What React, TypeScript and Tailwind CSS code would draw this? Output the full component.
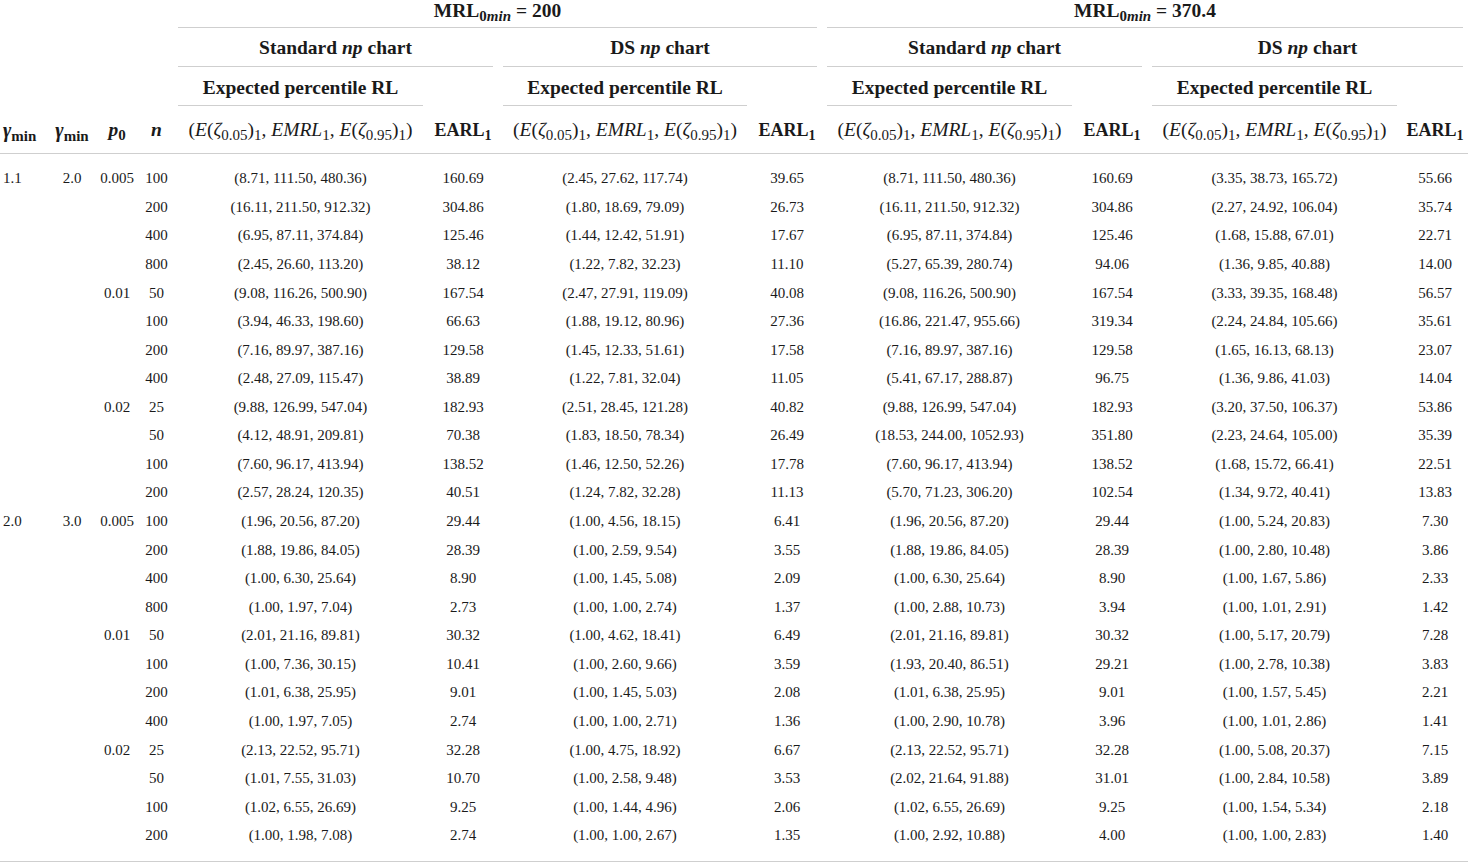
import React from "react"

type Row = {
  g1?: string
  g2?: string
  p0?: string
  n: string
  v: [string, string, string, string, string, string, string, string]
}

const rows: Row[] = [
  { g1: "1.1", g2: "2.0", p0: "0.005", n: "100", v: ["(8.71, 111.50, 480.36)", "160.69", "(2.45, 27.62, 117.74)", "39.65", "(8.71, 111.50, 480.36)", "160.69", "(3.35, 38.73, 165.72)", "55.66"] },
  { n: "200", v: ["(16.11, 211.50, 912.32)", "304.86", "(1.80, 18.69, 79.09)", "26.73", "(16.11, 211.50, 912.32)", "304.86", "(2.27, 24.92, 106.04)", "35.74"] },
  { n: "400", v: ["(6.95, 87.11, 374.84)", "125.46", "(1.44, 12.42, 51.91)", "17.67", "(6.95, 87.11, 374.84)", "125.46", "(1.68, 15.88, 67.01)", "22.71"] },
  { n: "800", v: ["(2.45, 26.60, 113.20)", "38.12", "(1.22, 7.82, 32.23)", "11.10", "(5.27, 65.39, 280.74)", "94.06", "(1.36, 9.85, 40.88)", "14.00"] },
  { p0: "0.01", n: "50", v: ["(9.08, 116.26, 500.90)", "167.54", "(2.47, 27.91, 119.09)", "40.08", "(9.08, 116.26, 500.90)", "167.54", "(3.33, 39.35, 168.48)", "56.57"] },
  { n: "100", v: ["(3.94, 46.33, 198.60)", "66.63", "(1.88, 19.12, 80.96)", "27.36", "(16.86, 221.47, 955.66)", "319.34", "(2.24, 24.84, 105.66)", "35.61"] },
  { n: "200", v: ["(7.16, 89.97, 387.16)", "129.58", "(1.45, 12.33, 51.61)", "17.58", "(7.16, 89.97, 387.16)", "129.58", "(1.65, 16.13, 68.13)", "23.07"] },
  { n: "400", v: ["(2.48, 27.09, 115.47)", "38.89", "(1.22, 7.81, 32.04)", "11.05", "(5.41, 67.17, 288.87)", "96.75", "(1.36, 9.86, 41.03)", "14.04"] },
  { p0: "0.02", n: "25", v: ["(9.88, 126.99, 547.04)", "182.93", "(2.51, 28.45, 121.28)", "40.82", "(9.88, 126.99, 547.04)", "182.93", "(3.20, 37.50, 106.37)", "53.86"] },
  { n: "50", v: ["(4.12, 48.91, 209.81)", "70.38", "(1.83, 18.50, 78.34)", "26.49", "(18.53, 244.00, 1052.93)", "351.80", "(2.23, 24.64, 105.00)", "35.39"] },
  { n: "100", v: ["(7.60, 96.17, 413.94)", "138.52", "(1.46, 12.50, 52.26)", "17.78", "(7.60, 96.17, 413.94)", "138.52", "(1.68, 15.72, 66.41)", "22.51"] },
  { n: "200", v: ["(2.57, 28.24, 120.35)", "40.51", "(1.24, 7.82, 32.28)", "11.13", "(5.70, 71.23, 306.20)", "102.54", "(1.34, 9.72, 40.41)", "13.83"] },
  { g1: "2.0", g2: "3.0", p0: "0.005", n: "100", v: ["(1.96, 20.56, 87.20)", "29.44", "(1.00, 4.56, 18.15)", "6.41", "(1.96, 20.56, 87.20)", "29.44", "(1.00, 5.24, 20.83)", "7.30"] },
  { n: "200", v: ["(1.88, 19.86, 84.05)", "28.39", "(1.00, 2.59, 9.54)", "3.55", "(1.88, 19.86, 84.05)", "28.39", "(1.00, 2.80, 10.48)", "3.86"] },
  { n: "400", v: ["(1.00, 6.30, 25.64)", "8.90", "(1.00, 1.45, 5.08)", "2.09", "(1.00, 6.30, 25.64)", "8.90", "(1.00, 1.67, 5.86)", "2.33"] },
  { n: "800", v: ["(1.00, 1.97, 7.04)", "2.73", "(1.00, 1.00, 2.74)", "1.37", "(1.00, 2.88, 10.73)", "3.94", "(1.00, 1.01, 2.91)", "1.42"] },
  { p0: "0.01", n: "50", v: ["(2.01, 21.16, 89.81)", "30.32", "(1.00, 4.62, 18.41)", "6.49", "(2.01, 21.16, 89.81)", "30.32", "(1.00, 5.17, 20.79)", "7.28"] },
  { n: "100", v: ["(1.00, 7.36, 30.15)", "10.41", "(1.00, 2.60, 9.66)", "3.59", "(1.93, 20.40, 86.51)", "29.21", "(1.00, 2.78, 10.38)", "3.83"] },
  { n: "200", v: ["(1.01, 6.38, 25.95)", "9.01", "(1.00, 1.45, 5.03)", "2.08", "(1.01, 6.38, 25.95)", "9.01", "(1.00, 1.57, 5.45)", "2.21"] },
  { n: "400", v: ["(1.00, 1.97, 7.05)", "2.74", "(1.00, 1.00, 2.71)", "1.36", "(1.00, 2.90, 10.78)", "3.96", "(1.00, 1.01, 2.86)", "1.41"] },
  { p0: "0.02", n: "25", v: ["(2.13, 22.52, 95.71)", "32.28", "(1.00, 4.75, 18.92)", "6.67", "(2.13, 22.52, 95.71)", "32.28", "(1.00, 5.08, 20.37)", "7.15"] },
  { n: "50", v: ["(1.01, 7.55, 31.03)", "10.70", "(1.00, 2.58, 9.48)", "3.53", "(2.02, 21.64, 91.88)", "31.01", "(1.00, 2.84, 10.58)", "3.89"] },
  { n: "100", v: ["(1.02, 6.55, 26.69)", "9.25", "(1.00, 1.44, 4.96)", "2.06", "(1.02, 6.55, 26.69)", "9.25", "(1.00, 1.54, 5.34)", "2.18"] },
  { n: "200", v: ["(1.00, 1.98, 7.08)", "2.74", "(1.00, 1.00, 2.67)", "1.35", "(1.00, 2.92, 10.88)", "4.00", "(1.00, 1.00, 2.83)", "1.40"] },
]

// the percentile triple as typeset in the column heads
function Triple() {
  return (
    <span className="font-normal whitespace-nowrap text-[19.5px]">
      (<i>E</i>(<i>ζ</i><sub className="text-[15px]">0.05</sub>)<sub className="text-[15px]">1</sub>, <i>EMRL</i>
      <sub className="text-[15px]">1</sub>, <i>E</i>(<i>ζ</i><sub className="text-[15px]">0.95</sub>)<sub className="text-[15px]">1</sub>)
    </span>
  )
}

function Earl() {
  return (
    <span className="font-bold whitespace-nowrap text-[18px]">
      EARL<sub className="text-[14px]">1</sub>
    </span>
  )
}

function Gamma() {
  return (
    <span className="whitespace-nowrap">
      <i className="text-[20px]">γ</i>
      <sub className="text-[15px]">min</sub>
    </span>
  )
}

function Line({ children, h }: { children?: React.ReactNode; h: string }) {
  return <div className={`mx-[5px] flex items-center justify-center border-b border-[#cfcfcf] ${h}`}>{children}</div>
}

export default function App() {
  return (
    <div className="w-[1468px] h-[864px] overflow-hidden bg-white text-[#1a1a1a]" style={{ fontFamily: '"Liberation Serif", "Times New Roman", serif' }}>
      <table className="w-[1468px] table-fixed border-collapse">
        <colgroup>
          <col className="w-[50px]" />
          <col className="w-[44px]" />
          <col className="w-[46px]" />
          <col className="w-[33px]" />
          <col className="w-[255px]" />
          <col className="w-[70px]" />
          <col className="w-[254px]" />
          <col className="w-[70px]" />
          <col className="w-[255px]" />
          <col className="w-[70px]" />
          <col className="w-[255px]" />
          <col className="w-[66px]" />
        </colgroup>
        <thead className="text-[19.5px] leading-[22px]">
          <tr>
            <th colSpan={4} className="p-0" />
            <th colSpan={4} className="p-0 font-bold">
              <Line h="h-[28px] pb-[5px]">
                <span>MRL<sub className="text-[15px]">0<i>min</i></sub> = 200</span>
              </Line>
            </th>
            <th colSpan={4} className="p-0 font-bold">
              <Line h="h-[28px] pb-[5px]">
                <span>MRL<sub className="text-[15px]">0<i>min</i></sub> = 370.4</span>
              </Line>
            </th>
          </tr>
          <tr>
            <th colSpan={4} className="p-0" />
            {["Standard", "DS", "Standard", "DS"].map((t, i) => (
              <th key={i} colSpan={2} className="p-0 font-bold">
                <Line h="h-[39px] pt-[2px]">
                  <span>{t} <i>np</i> chart</span>
                </Line>
              </th>
            ))}
          </tr>
          <tr>
            <th colSpan={4} className="p-0" />
            {[0, 1, 2, 3].map((i) => (
              <React.Fragment key={i}>
                <th className="p-0 font-bold">
                  <Line h="h-[39px] pt-[4px]">Expected percentile RL</Line>
                </th>
                <th className="p-0" />
              </React.Fragment>
            ))}
          </tr>
          <tr className="h-[47px] border-b border-[#cfcfcf]">
            <th className="pl-[3px] pt-[2px] text-left font-bold">
              <Gamma />
            </th>
            <th className="pt-[2px] text-center font-bold">
              <Gamma />
            </th>
            <th className="pt-[2px] text-center font-bold">
              <i>p</i>
              <sub className="text-[15px]">0</sub>
            </th>
            <th className="pt-[2px] text-center font-bold">
              <i>n</i>
            </th>
            {[0, 1, 2, 3].map((i) => (
              <React.Fragment key={i}>
                <th className="pt-[2px] text-center">
                  <Triple />
                </th>
                <th className="pt-[2px] text-center">
                  <Earl />
                </th>
              </React.Fragment>
            ))}
          </tr>
        </thead>
        <tbody className="text-[15px] leading-[20px]">
          <tr className="h-[11px]">
            <td colSpan={12} />
          </tr>
          {rows.map((r, i) => (
            <tr key={i} className="h-[28.57px]">
              <td className="pl-[3px] text-left">{r.g1}</td>
              <td className="text-center">{r.g2}</td>
              <td className="text-center">{r.p0}</td>
              <td className="text-center">{r.n}</td>
              {r.v.map((c, j) => (
                <td key={j} className="text-center whitespace-nowrap">
                  {c}
                </td>
              ))}
            </tr>
          ))}
          <tr className="h-[12px] border-b border-[#cfcfcf]">
            <td colSpan={12} />
          </tr>
        </tbody>
      </table>
    </div>
  )
}
